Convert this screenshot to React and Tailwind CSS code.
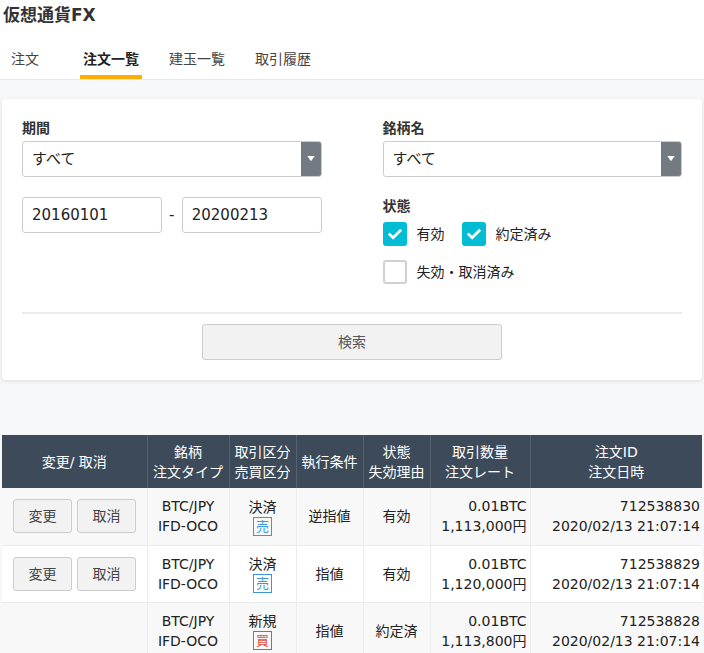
import React from "react";

const Check = () => (
  <svg viewBox="0 0 24 24" className="w-[18px] h-[18px]" fill="none" stroke="white" strokeWidth="3.6" strokeLinecap="square">
    <path d="M5 12.5l4.5 4.5L19 7.5" />
  </svg>
);

const Select = () => (
  <div className="flex h-[36px] border border-[#cccccc] rounded-[3px] bg-white overflow-hidden">
    <div className="flex-1 flex items-center pl-[9px] text-[15px] text-[#222]">すべて</div>
    <div className="w-[20px] bg-[#737a82] flex items-center justify-center">
      <svg viewBox="0 0 10 8" className="w-[8px] h-[6px]"><path d="M0 0h10L5 7z" fill="white" /></svg>
    </div>
  </div>
);

const Badge = ({ t, c }) => (
  <span className={`inline-flex items-center justify-center w-[19px] h-[19px] border text-[13px] leading-none ${c}`}>{t}</span>
);

const rows = [
  { btn: true, kubun: "決済", side: "売", sell: true, cond: "逆指値", st: "有効", rate: "1,113,000円", id: "712538830", bg: "bg-[#f8f8f8]" },
  { btn: true, kubun: "決済", side: "売", sell: true, cond: "指値", st: "有効", rate: "1,120,000円", id: "712538829", bg: "bg-white" },
  { btn: false, kubun: "新規", side: "買", sell: false, cond: "指値", st: "約定済", rate: "1,113,800円", id: "712538828", bg: "bg-[#f8f8f8]" },
];

export default function App() {
  return (
    <div className="w-[704px] h-[653px] overflow-hidden bg-[#f7f8fa] text-[#222]" style={{ fontFamily: '"DejaVu Sans", "Noto Sans CJK JP", sans-serif' }}>
      <div className="bg-white border-b border-[#e6e7ea]">
        <div className="pl-[3px] pt-[3px] h-[38px] text-[17px] font-bold text-[#333] leading-[24px]">仮想通貨FX</div>
        <div className="flex h-[41px] text-[14px] text-[#444]">
          <div className="w-[80px] pl-[11px] pt-[11px]">注文</div>
          <div className="w-[62px] flex flex-col">
            <div className="pt-[11px] font-bold text-[#222] text-center h-[37px]">注文一覧</div>
            <div className="h-[4px] bg-[#ffad00]"></div>
          </div>
          <div className="ml-[27px] w-[86px] pt-[11px]">建玉一覧</div>
          <div className="pt-[11px]">取引履歴</div>
        </div>
      </div>

      <div className="mx-[2px] mt-[19px] bg-white rounded-[4px] shadow-[0_1px_4px_rgba(0,0,0,0.12)] px-[20px] pt-[19px] pb-[20px]">
        <div className="grid grid-cols-2 gap-x-[61px]">
          <div>
            <div className="text-[14px] font-bold text-[#333] h-[23px]">期間</div>
            <Select />
            <div className="flex items-center mt-[20px]">
              <div className="w-[140px] h-[36px] border border-[#cccccc] rounded-[3px] flex items-center pl-[9px] text-[15px]">20160101</div>
              <div className="w-[20px] text-center text-[15px]">-</div>
              <div className="w-[140px] h-[36px] border border-[#cccccc] rounded-[3px] flex items-center pl-[9px] text-[15px]">20200213</div>
            </div>
          </div>
          <div>
            <div className="text-[14px] font-bold text-[#333] h-[23px]">銘柄名</div>
            <Select />
            <div className="text-[14px] font-bold text-[#333] mt-[19px] h-[26px]">状態</div>
            <div className="flex items-center h-[24px] text-[14px]">
              <div className="w-[24px] h-[24px] rounded-[3px] bg-[#00bcd4] flex items-center justify-center"><Check /></div>
              <span className="ml-[10px] w-[45px]">有効</span>
              <div className="w-[24px] h-[24px] rounded-[3px] bg-[#00bcd4] flex items-center justify-center"><Check /></div>
              <span className="ml-[10px]">約定済み</span>
            </div>
            <div className="flex items-center h-[24px] mt-[14px] text-[14px]">
              <div className="w-[24px] h-[24px] rounded-[3px] border-2 border-[#d0d0d0] bg-white"></div>
              <span className="ml-[10px]">失効・取消済み</span>
            </div>
          </div>
        </div>
        <div className="h-[2px] bg-[#ececec] mt-[28px]"></div>
        <div className="flex justify-center mt-[10px]">
          <div className="w-[300px] h-[36px] bg-[#f2f2f2] border border-[#cccccc] rounded-[3px] flex items-center justify-center text-[14px] text-[#555]">検索</div>
        </div>
      </div>

      <table className="mx-[2px] mt-[55px] w-[700px] table-fixed border-collapse text-[14px] leading-[20px]">
        <colgroup>
          <col className="w-[145px]" />
          <col className="w-[82px]" />
          <col className="w-[67px]" />
          <col className="w-[67px]" />
          <col className="w-[67px]" />
          <col className="w-[100px]" />
          <col className="w-[172px]" />
        </colgroup>
        <thead>
          <tr className="bg-[#3d4a5a] text-white h-[53px]">
            <th className="font-normal border-r border-[#56616f]">変更/ 取消</th>
            <th className="font-normal border-r border-[#56616f]">銘柄<br />注文タイプ</th>
            <th className="font-normal border-r border-[#56616f]">取引区分<br />売買区分</th>
            <th className="font-normal border-r border-[#56616f]">執行条件</th>
            <th className="font-normal border-r border-[#56616f]">状態<br />失効理由</th>
            <th className="font-normal border-r border-[#56616f]">取引数量<br />注文レート</th>
            <th className="font-normal">注文ID<br />注文日時</th>
          </tr>
        </thead>
        <tbody>
          {rows.map((r, i) => (
            <tr key={i} className={`${r.bg} h-[57px] border-b border-[#ececec]`}>
              <td className="border-r border-[#ececec]">
                {r.btn && (
                  <div className="flex gap-[5px] pl-[11px]">
                    <div className="w-[59px] h-[34px] bg-[#f2f2f2] border border-[#cccccc] rounded-[3px] flex items-center justify-center text-[#444]">変更</div>
                    <div className="w-[59px] h-[34px] bg-[#f2f2f2] border border-[#cccccc] rounded-[3px] flex items-center justify-center text-[#444]">取消</div>
                  </div>
                )}
              </td>
              <td className="text-center border-r border-[#ececec]">BTC/JPY<br />IFD-OCO</td>
              <td className="text-center border-r border-[#ececec]">
                <div>{r.kubun}</div>
                <div className="flex justify-center">
                  <Badge t={r.side} c={r.sell ? "border-[#3b97d9] text-[#3b97d9]" : "border-[#e74c3c] text-[#e74c3c]"} />
                </div>
              </td>
              <td className="text-center border-r border-[#ececec]">{r.cond}</td>
              <td className="text-center border-r border-[#ececec]">{r.st}</td>
              <td className="text-right pr-[3px] border-r border-[#ececec]">0.01BTC<br />{r.rate}</td>
              <td className="text-right pr-[2px]">{r.id}<br />2020/02/13 21:07:14</td>
            </tr>
          ))}
        </tbody>
      </table>
    </div>
  );
}
